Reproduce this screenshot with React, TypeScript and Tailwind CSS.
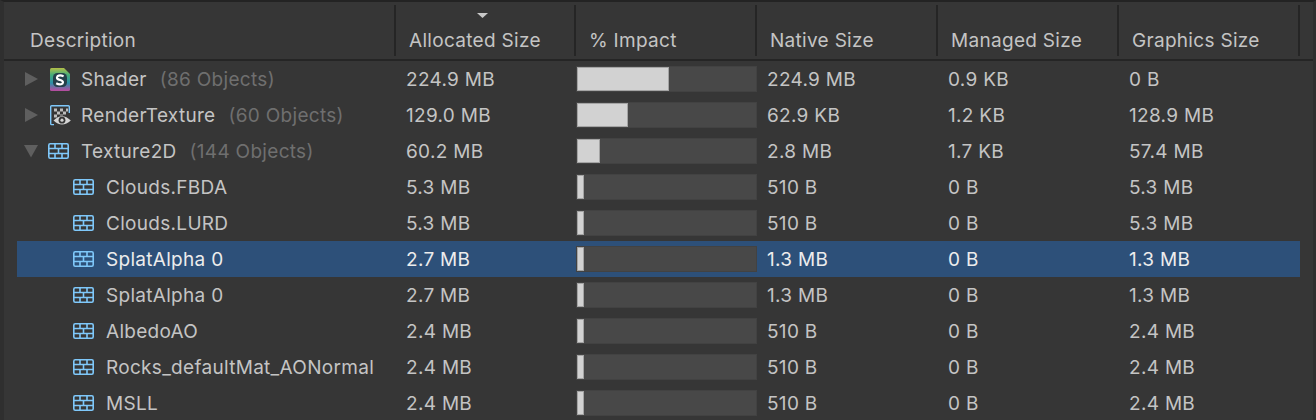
const Arrow = ({ open }: { open?: boolean }) => (
  <svg width="16" height="16" viewBox="0 0 16 16" className="shrink-0">
    {open ? <polygon points="0,2 14,2 7,14.5" fill="#5f5f5f" /> : <polygon points="1,1 14,8 1,15" fill="#5f5f5f" />}
  </svg>
);

const TexIcon = () => (
  <svg width="21" height="16" viewBox="0 0 21 16" className="shrink-0" fill="none" stroke="#7fc8fa" strokeWidth="1.6">
    <rect x="0.8" y="0.8" width="19.4" height="14.4" rx="1.4" />
    <path d="M0.8 5.5H20.2M0.8 10.5H20.2M7 0.8V5.5M14 0.8V5.5M10.5 5.5V10.5M7 10.5V15.2M14 10.5V15.2" />
  </svg>
);

const ShaderIcon = () => (
  <svg width="20" height="23" viewBox="0 0 20 23" className="shrink-0">
    <defs>
      <linearGradient id="sg" x1="0" y1="0" x2="0" y2="1">
        <stop offset="0" stopColor="#b4bf48" />
        <stop offset="0.3" stopColor="#45ad78" />
        <stop offset="0.65" stopColor="#2b8fa8" />
        <stop offset="1" stopColor="#bb4a9e" />
      </linearGradient>
    </defs>
    <path d="M0 1.5Q0 0 1.5 0H14L20 6V21.5Q20 23 18.5 23H1.5Q0 23 0 21.5Z" fill="url(#sg)" />
    <rect x="3" y="5" width="14" height="14" rx="4.5" fill="#25404a" />
    <path d="M13.6 8.4Q10 6.4 7.6 8.2Q5.8 10.6 9 11.6L11 12.2Q14 13.4 12.4 15.6Q9.8 17.3 6.2 15.2" fill="none" stroke="#fff" strokeWidth="2.2" />
  </svg>
);

const RenderIcon = () => (
  <svg width="21" height="21" viewBox="0 0 21 21" className="shrink-0">
    <path d="M4 19.6H1.6Q0.7 19.6 0.7 18.7V1.6Q0.7 0.7 1.6 0.7H18.4Q19.3 0.7 19.3 1.6V8" fill="none" stroke="#7fc8fa" strokeWidth="1.4" />
    <path d="M4 3.5h3v3H4zM10 3.5h3v3h-3zM16 3.5h2v3h-2zM7 6.5h3v3H7zM13 6.5h3v3h-3zM4 9.5h3v3H4zM10 9.5h3v1h-3z" fill="#bdbdbd" />
    <path d="M3.5 15.5Q12 7 20.8 15.5Q12 23.5 3.5 15.5Z" fill="#d4d4d4" />
    <circle cx="12" cy="15.2" r="3.4" fill="#363636" />
    <circle cx="12" cy="15.2" r="1.6" fill="#d4d4d4" />
  </svg>
);

type Row = {
  name: string;
  count?: string;
  alloc: string;
  fill: number;
  native: string;
  managed: string;
  graphics: string;
  kind: "shader" | "render" | "tex" | "child";
  selected?: boolean;
};

const rows: Row[] = [
  { name: "Shader", count: "(86 Objects)", alloc: "224.9 MB", fill: 92, native: "224.9 MB", managed: "0.9 KB", graphics: "0 B", kind: "shader" },
  { name: "RenderTexture", count: "(60 Objects)", alloc: "129.0 MB", fill: 51, native: "62.9 KB", managed: "1.2 KB", graphics: "128.9 MB", kind: "render" },
  { name: "Texture2D", count: "(144 Objects)", alloc: "60.2 MB", fill: 23, native: "2.8 MB", managed: "1.7 KB", graphics: "57.4 MB", kind: "tex" },
  { name: "Clouds.FBDA", alloc: "5.3 MB", fill: 7, native: "510 B", managed: "0 B", graphics: "5.3 MB", kind: "child" },
  { name: "Clouds.LURD", alloc: "5.3 MB", fill: 7, native: "510 B", managed: "0 B", graphics: "5.3 MB", kind: "child" },
  { name: "SplatAlpha 0", alloc: "2.7 MB", fill: 7, native: "1.3 MB", managed: "0 B", graphics: "1.3 MB", kind: "child", selected: true },
  { name: "SplatAlpha 0", alloc: "2.7 MB", fill: 7, native: "1.3 MB", managed: "0 B", graphics: "1.3 MB", kind: "child" },
  { name: "AlbedoAO", alloc: "2.4 MB", fill: 7, native: "510 B", managed: "0 B", graphics: "2.4 MB", kind: "child" },
  { name: "Rocks_defaultMat_AONormal", alloc: "2.4 MB", fill: 7, native: "510 B", managed: "0 B", graphics: "2.4 MB", kind: "child" },
  { name: "MSLL", alloc: "2.4 MB", fill: 7, native: "510 B", managed: "0 B", graphics: "2.4 MB", kind: "child" },
];

const headers = ["Allocated Size", "% Impact", "Native Size", "Managed Size", "Graphics Size"];

export default function App() {
  return (
    <div className="w-[1316px] h-[420px] overflow-hidden bg-[#363636] text-[#c4c4c4] text-[19px] tracking-[0.3px] leading-[36px] font-['Inter',sans-serif] flex flex-col border-t-2 border-t-[#232323] border-l-4 border-l-[#2f2f2f] border-r-[3px] border-r-[#2f2f2f]">
      <div className="flex h-[59px] shrink-0 border-b-2 border-[#252525]">
        <div className="w-[392px] shrink-0 pl-[26px] pt-[18px] border-r-2 border-[#252525] mt-[3px] h-[51px]">Description</div>
        {headers.map((h, i) => (
          <div key={h} className={`relative shrink-0 pl-[13px] pt-[18px] border-r-2 border-[#252525] mt-[3px] h-[51px] whitespace-nowrap ${i === 0 ? "w-[180px]" : "w-[181px]"}`}>
            {i === 0 && (
              <svg width="11" height="5" viewBox="0 0 11 5" className="absolute left-[81px] top-[8px]">
                <polygon points="0,0 11,0 5.5,5" fill="#c8c8c8" />
              </svg>
            )}
            {h}
          </div>
        ))}
      </div>
      <div className="flex flex-col pl-[13px]">
        {rows.map((r, i) => (
          <div key={i} className={`flex h-[36px] w-[1283px] shrink-0 items-center ${r.selected ? "bg-[#2d5079] text-[#ececec]" : ""}`}>
            <div className={`w-[389px] shrink-0 flex items-center ${r.kind === "child" ? "pl-[56px]" : "pl-[7px]"}`}>
              {r.kind !== "child" && <Arrow open={r.kind === "tex"} />}
              {r.kind === "shader" && <span className="ml-[10px] mr-[11px] flex"><ShaderIcon /></span>}
              {r.kind === "render" && <span className="ml-[10px] mr-[10px] flex"><RenderIcon /></span>}
              {r.kind === "tex" && <span className="ml-[8px] mr-[12px] flex"><TexIcon /></span>}
              {r.kind === "child" && <span className="mr-[12px] flex"><TexIcon /></span>}
              <span className="whitespace-nowrap pt-[2px]">{r.name}</span>
              {r.count && <span className="ml-[13px] pt-[2px] text-[#6f6f6f] whitespace-nowrap">{r.count}</span>}
            </div>
            <div className="w-[170px] shrink-0 pt-[2px]">{r.alloc}</div>
            <div className="w-[181px] h-[26px] shrink-0 bg-[#484848] border border-[#424242]">
              <div className="h-full bg-[#d2d2d2] border border-[#a4a4a4]" style={{ width: r.fill }} />
            </div>
            <div className="w-[181px] shrink-0 pl-[10px] pt-[2px]">{r.native}</div>
            <div className="w-[181px] shrink-0 pl-[10px] pt-[2px]">{r.managed}</div>
            <div className="w-[181px] shrink-0 pl-[10px] pt-[2px]">{r.graphics}</div>
          </div>
        ))}
      </div>
    </div>
  );
}
